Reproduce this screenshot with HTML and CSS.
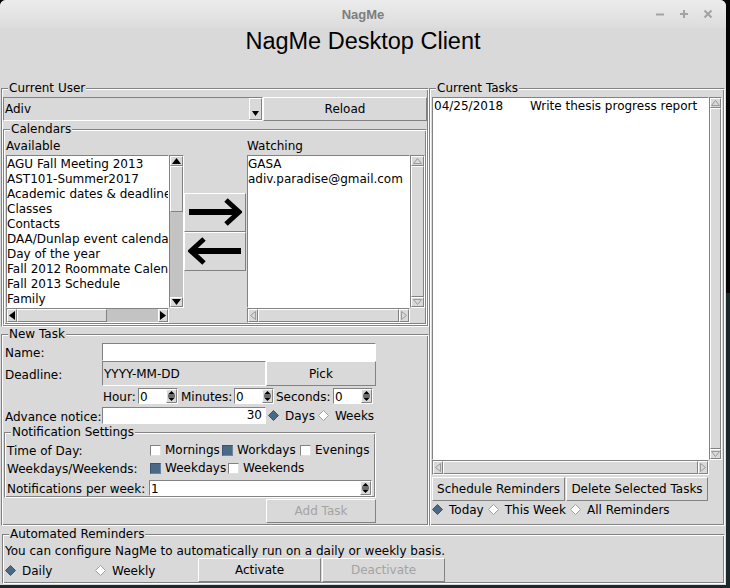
FILE: index.html
```html
<!DOCTYPE html>
<html lang="en">
<head>
<meta charset="utf-8">
<title>NagMe</title>
<link rel="stylesheet" href="styles.css">
</head>
<body>
<div class="window">
  <div class="titlebar">
    <span class="wtitle">NagMe</span>
    <div class="wctrl">
      <svg width="10" height="10" viewBox="0 0 10 10"><path d="M1 5.5H9"/></svg>
      <svg width="10" height="10" viewBox="0 0 10 10"><path d="M1 5H9M5 1V9"/></svg>
      <svg width="10" height="10" viewBox="0 0 10 10"><path d="M1.5 1.5L8.5 8.5M8.5 1.5L1.5 8.5"/></svg>
    </div>
  </div>
  <h1 class="heading">NagMe Desktop Client</h1>
  <div class="main">
    <div class="leftcol">
      <fieldset class="frame user">
        <legend>Current User</legend>
        <div class="userrow">
          <div class="combo"><span class="combotext">Adiv</span><span class="dropbtn"><svg width="7" height="5" viewBox="0 0 7 5"><path d="M0 0H7L3.5 5Z"/></svg></span></div>
          <button class="btn reload">Reload</button>
        </div>
        <fieldset class="frame calendars">
          <legend>Calendars</legend>
          <div class="calgrid">
            <div class="caplabel">Available</div>
            <div></div>
            <div class="caplabel">Watching</div>
            <div class="listcell">
              <div class="listbox cal">
                <div>AGU Fall Meeting 2013</div>
                <div>AST101-Summer2017</div>
                <div>Academic dates &amp; deadlines</div>
                <div>Classes</div>
                <div>Contacts</div>
                <div>DAA/Dunlap event calendar</div>
                <div>Day of the year</div>
                <div>Fall 2012 Roommate Calendar</div>
                <div>Fall 2013 Schedule</div>
                <div>Family</div>
                <div>Finals</div>
              </div>
              <div class="vscroll">
                <div class="sarr v"><svg width="9" height="6" viewBox="0 0 9 6"><path d="M0 6L4.5 0L9 6Z"/></svg></div>
                <div class="slider vslide-avail"></div>
                <div class="trough"></div>
                <div class="sarr v"><svg width="9" height="6" viewBox="0 0 9 6"><path d="M0 0L4.5 6L9 0Z"/></svg></div>
              </div>
            </div>
            <div class="arrowcell">
              <button class="btn arrowbtn"><svg width="54" height="30" viewBox="0 0 54 30"><path class="shaft" d="M1 15H49"/><path class="head" d="M38 3L51 15L38 27"/></svg></button>
              <button class="btn arrowbtn"><svg width="54" height="30" viewBox="0 0 54 30"><path class="shaft" d="M5 15H53"/><path class="head" d="M16 3L3 15L16 27"/></svg></button>
            </div>
            <div class="listcell">
              <div class="listbox cal">
                <div>GASA</div>
                <div>adiv.paradise@gmail.com</div>
              </div>
              <div class="vscroll off">
                <div class="sarr v"><svg width="9" height="6" viewBox="0 0 9 6"><path d="M0.5 5.5L4.5 0.5L8.5 5.5Z"/></svg></div>
                <div class="slider full"></div>
                <div class="sarr v"><svg width="9" height="6" viewBox="0 0 9 6"><path d="M0.5 0.5L4.5 5.5L8.5 0.5Z"/></svg></div>
              </div>
            </div>
            <div class="hscroll">
              <div class="sarr h"><svg width="6" height="9" viewBox="0 0 6 9"><path d="M6 0L0 4.5L6 9Z"/></svg></div>
              <div class="slider hslide-avail"></div>
              <div class="trough"></div>
              <div class="sarr h"><svg width="6" height="9" viewBox="0 0 6 9"><path d="M0 0L6 4.5L0 9Z"/></svg></div>
            </div>
            <div></div>
            <div class="hscroll off">
              <div class="sarr h"><svg width="6" height="9" viewBox="0 0 6 9"><path d="M5.5 0.5L0.5 4.5L5.5 8.5Z"/></svg></div>
              <div class="slider full"></div>
              <div class="sarr h"><svg width="6" height="9" viewBox="0 0 6 9"><path d="M0.5 0.5L5.5 4.5L0.5 8.5Z"/></svg></div>
            </div>
          </div>
        </fieldset>
      </fieldset>

      <fieldset class="frame newtask">
        <legend>New Task</legend>
        <div class="ntrow namerow">
          <span class="ntlabel">Name:</span>
          <div class="entry nameentry"></div>
        </div>
        <div class="ntrow deadrow">
          <span class="ntlabel">Deadline:</span>
          <div class="entry dateentry">YYYY-MM-DD</div>
          <button class="btn pick">Pick</button>
        </div>
        <div class="ntrow timerow">
          <span class="ntlabel"></span>
          <span class="tl hourl">Hour:</span>
          <div class="spin tspin"><span class="spintext">0</span><svg class="spinbtn" width="11" height="14" viewBox="0 0 11 14"><rect x="0" y="0" width="11" height="14" fill="#d9d9d9"/><path d="M0.5 13.5V0.5H10.5" stroke="#fff" fill="none"/><path d="M0.5 13.5H10.5V0.5" stroke="#828282" fill="none"/><path d="M2 5.5L5.5 2L9 5.5Z" fill="#000"/><path d="M2 8.5L5.5 12L9 8.5Z" fill="#000"/><path d="M2 7H9" stroke="#000"/></svg></div>
          <span class="tl minl">Minutes:</span>
          <div class="spin tspin"><span class="spintext">0</span><svg class="spinbtn" width="11" height="14" viewBox="0 0 11 14"><rect x="0" y="0" width="11" height="14" fill="#d9d9d9"/><path d="M0.5 13.5V0.5H10.5" stroke="#fff" fill="none"/><path d="M0.5 13.5H10.5V0.5" stroke="#828282" fill="none"/><path d="M2 5.5L5.5 2L9 5.5Z" fill="#000"/><path d="M2 8.5L5.5 12L9 8.5Z" fill="#000"/><path d="M2 7H9" stroke="#000"/></svg></div>
          <span class="tl secl">Seconds:</span>
          <div class="spin tspin"><span class="spintext">0</span><svg class="spinbtn" width="11" height="14" viewBox="0 0 11 14"><rect x="0" y="0" width="11" height="14" fill="#d9d9d9"/><path d="M0.5 13.5V0.5H10.5" stroke="#fff" fill="none"/><path d="M0.5 13.5H10.5V0.5" stroke="#828282" fill="none"/><path d="M2 5.5L5.5 2L9 5.5Z" fill="#000"/><path d="M2 8.5L5.5 12L9 8.5Z" fill="#000"/><path d="M2 7H9" stroke="#000"/></svg></div>
        </div>
        <div class="ntrow advrow">
          <span class="ntlabel">Advance notice:</span>
          <div class="entry adventry">30</div>
          <span class="radio"><svg class="dia" width="11" height="11" viewBox="0 0 11 11"><path class="on" d="M5.5 0.5L10.5 5.5L5.5 10.5L0.5 5.5Z"/></svg><span class="rtext">Days</span></span>
          <span class="radio"><svg class="dia" width="11" height="11" viewBox="0 0 11 11"><path class="offd" d="M5.5 0.5L10.5 5.5L5.5 10.5L0.5 5.5Z"/></svg><span class="rtext">Weeks</span></span>
        </div>
        <fieldset class="frame notif">
          <legend>Notification Settings</legend>
          <div class="nrow first">
            <span class="nlabel">Time of Day:</span>
            <span class="chk w72"><span class="box"></span>Mornings</span>
            <span class="chk w78"><span class="box checked"></span>Workdays</span>
            <span class="chk"><span class="box"></span>Evenings</span>
          </div>
          <div class="nrow">
            <span class="nlabel">Weekdays/Weekends:</span>
            <span class="chk w78"><span class="box checked"></span>Weekdays</span>
            <span class="chk"><span class="box"></span>Weekends</span>
          </div>
          <div class="nrow perweek">
            <span class="nlabel short">Notifications per week:</span>
            <div class="spin wspin"><span class="spintext">1</span><svg class="spinbtn" width="11" height="14" viewBox="0 0 11 14"><rect x="0" y="0" width="11" height="14" fill="#d9d9d9"/><path d="M0.5 13.5V0.5H10.5" stroke="#fff" fill="none"/><path d="M0.5 13.5H10.5V0.5" stroke="#828282" fill="none"/><path d="M2 5.5L5.5 2L9 5.5Z" fill="#000"/><path d="M2 8.5L5.5 12L9 8.5Z" fill="#000"/><path d="M2 7H9" stroke="#000"/></svg></div>
          </div>
        </fieldset>
        <div class="ntrow addrow">
          <button class="btn addtask" disabled>Add Task</button>
        </div>
      </fieldset>
    </div>

    <fieldset class="frame tasks">
      <legend>Current Tasks</legend>
      <div class="tgrid">
        <div class="listbox tlist">
          <div><span class="tdate">04/25/2018</span>Write thesis progress report</div>
        </div>
        <div class="vscroll off">
          <div class="sarr v"><svg width="9" height="6" viewBox="0 0 9 6"><path d="M0.5 5.5L4.5 0.5L8.5 5.5Z"/></svg></div>
          <div class="slider full"></div>
          <div class="sarr v"><svg width="9" height="6" viewBox="0 0 9 6"><path d="M0.5 0.5L4.5 5.5L8.5 0.5Z"/></svg></div>
        </div>
        <div class="hscroll off">
          <div class="sarr h"><svg width="6" height="9" viewBox="0 0 6 9"><path d="M5.5 0.5L0.5 4.5L5.5 8.5Z"/></svg></div>
          <div class="slider full"></div>
          <div class="sarr h"><svg width="6" height="9" viewBox="0 0 6 9"><path d="M0.5 0.5L5.5 4.5L0.5 8.5Z"/></svg></div>
        </div>
      </div>
      <div class="tbtns">
        <button class="btn sched">Schedule Reminders</button>
        <button class="btn delsel">Delete Selected Tasks</button>
      </div>
      <div class="tradios">
        <span class="radio gap"><svg class="dia" width="11" height="11" viewBox="0 0 11 11"><path class="on" d="M5.5 0.5L10.5 5.5L5.5 10.5L0.5 5.5Z"/></svg><span class="rtext">Today</span></span>
        <span class="radio gap"><svg class="dia" width="11" height="11" viewBox="0 0 11 11"><path class="offd" d="M5.5 0.5L10.5 5.5L5.5 10.5L0.5 5.5Z"/></svg><span class="rtext">This Week</span></span>
        <span class="radio gap"><svg class="dia" width="11" height="11" viewBox="0 0 11 11"><path class="offd" d="M5.5 0.5L10.5 5.5L5.5 10.5L0.5 5.5Z"/></svg><span class="rtext">All Reminders</span></span>
      </div>
    </fieldset>
  </div>

  <fieldset class="frame auto">
    <legend>Automated Reminders</legend>
    <div class="autotext">You can configure NagMe to automatically run on a daily or weekly basis.</div>
    <div class="autorow">
      <span class="radio daily"><svg class="dia" width="11" height="11" viewBox="0 0 11 11"><path class="on" d="M5.5 0.5L10.5 5.5L5.5 10.5L0.5 5.5Z"/></svg><span class="rtext">Daily</span></span>
      <span class="radio weekly"><svg class="dia" width="11" height="11" viewBox="0 0 11 11"><path class="offd" d="M5.5 0.5L10.5 5.5L5.5 10.5L0.5 5.5Z"/></svg><span class="rtext">Weekly</span></span>
      <button class="btn autobtn">Activate</button>
      <button class="btn autobtn" disabled>Deactivate</button>
    </div>
  </fieldset>
</div>
</body>
</html>
```

FILE: styles.css
```css
* { box-sizing: border-box; }
html, body { margin: 0; padding: 0; }
body {
  width: 730px;
  height: 588px;
  overflow: hidden;
  background: linear-gradient(#040404 0, #040404 293px, #1a2a2b 293px);
  font-family: "DejaVu Sans", sans-serif;
  font-size: 12px;
  color: #000;
}
.window {
  width: 726px;
  height: 585px;
  background: #d9d9d9;
  border-radius: 6px 6px 0 0;
  overflow: hidden;
  display: flex;
  flex-direction: column;
}
.titlebar {
  height: 28px;
  flex: none;
  display: grid;
  grid-template-columns: 1fr auto 1fr;
  align-items: center;
  background: linear-gradient(#ececec, #dcdcdc);
}
.wtitle {
  grid-column: 2;
  font-family: "Liberation Sans", sans-serif;
  font-weight: bold;
  font-size: 13px;
  color: #7d7d7d;
}
.wctrl {
  grid-column: 3;
  justify-self: end;
  display: flex;
  gap: 14px;
  padding-right: 13px;
}
.wctrl svg { display: block; }
.wctrl path { stroke: #a3a3a3; stroke-width: 2; fill: none; }
.heading {
  margin: 0;
  height: 53px;
  flex: none;
  font-family: "Liberation Sans", sans-serif;
  font-weight: normal;
  font-size: 23.5px;
  line-height: 26px;
  text-align: center;
}
.main { display: flex; height: 446px; flex: none; }
.leftcol { width: 429px; padding-left: 1px; display: flex; flex-direction: column; }

.frame {
  margin: 0;
  padding: 0 1px 1px 1px;
  border: 1px solid;
  border-color: #828282 #fff #fff #828282;
  box-shadow: inset 1px 1px 0 #fff, inset -1px -1px 0 #828282;
  min-width: 0;
}
.frame > legend {
  margin-left: 5px;
  padding: 0 1px;
  height: 14px;
  line-height: 14px;
  background: #d9d9d9;
}

.btn {
  font: inherit;
  font-family: "DejaVu Sans", sans-serif;
  font-size: 12px;
  color: #000;
  background: #d9d9d9;
  border: 1px solid;
  border-color: #fff #828282 #828282 #fff;
  padding: 0;
  margin: 0;
  display: flex;
  align-items: center;
  justify-content: center;
}
.btn:disabled { color: #a3a3a3; }
.entry {
  background: #fff;
  border: 1px solid;
  border-color: #828282 #fff #fff #828282;
}

/* current user */
.user { height: 246px; width: 428px; }
.userrow { display: flex; margin-top: 2px; height: 24px; }
.combo {
  width: 260px;
  display: flex;
  align-items: center;
  justify-content: space-between;
  border: 1px solid;
  border-color: #828282 #fff #fff #828282;
  padding-left: 1px;
}
.dropbtn {
  width: 13px;
  height: 22px;
  border: 1px solid;
  border-color: #fff #828282 #828282 #fff;
  display: flex;
  align-items: flex-end;
  justify-content: center;
  padding-bottom: 3px;
}
.dropbtn svg { display: block; fill: #000; }
.reload { width: 164px; height: 24px; }

.calendars { margin-top: 1px; height: 203px; }
.calgrid {
  display: grid;
  grid-template-columns: 178px 63px 178px;
  grid-template-rows: 17px 153px 15px;
  margin-top: 2px;
  padding-left: 1px;
}
.caplabel { line-height: 15px; padding-top: 1px; white-space: nowrap; }
.listcell { display: flex; }
.listbox {
  background: #fff;
  border: 1px solid;
  border-color: #828282 #fff #fff #828282;
  overflow: hidden;
  white-space: nowrap;
  line-height: 15px;
  padding-top: 1px;
}
.listbox.cal { width: 163px; height: 153px; }
.arrowcell {
  display: flex;
  flex-direction: column;
  justify-content: center;
}
.arrowbtn { width: 62px; height: 39px; }
.arrowbtn svg { display: block; }
.arrowbtn .shaft { stroke: #000; stroke-width: 6; fill: none; }
.arrowbtn .head { stroke: #000; stroke-width: 5; fill: none; stroke-linejoin: miter; }

/* scrollbars */
.vscroll {
  width: 15px;
  display: flex;
  flex-direction: column;
  background: #c3c3c3;
  border: 1px solid;
  border-color: #828282 #fff #fff #828282;
}
.hscroll {
  width: 163px;
  height: 15px;
  display: flex;
  background: #c3c3c3;
  border: 1px solid;
  border-color: #828282 #fff #fff #828282;
}
.sarr {
  flex: none;
  background: #d9d9d9;
  border: 1px solid;
  border-color: #fff #828282 #828282 #fff;
  display: flex;
  align-items: center;
  justify-content: center;
}
.sarr.v { height: 10px; }
.sarr.h { width: 10px; }
.sarr svg { display: block; fill: #000; }
.off .sarr svg { fill: #d9d9d9; stroke: #9a9a9a; stroke-width: 1; }
.slider {
  flex: none;
  background: #d9d9d9;
  border: 1px solid;
  border-color: #fff #828282 #828282 #fff;
}
.slider.full { flex: 1; }
.trough { flex: 1; }
.vslide-avail { height: 46px; }
.hslide-avail { width: 90px; }
.off { background: #d9d9d9; }

/* new task */
.newtask { height: 199px; width: 428px; }
.ntrow { display: flex; align-items: center; }
.ntlabel { width: 99px; flex: none; padding-left: 2px; padding-top: 2px; white-space: nowrap; }
.namerow { margin-top: 2px; height: 18px; }
.nameentry { width: 274px; height: 18px; }
.deadrow { height: 25px; }
.dateentry {
  width: 164px;
  height: 25px;
  background: #d9d9d9;
  padding-left: 1px;
  padding-top: 1px;
  display: flex;
  align-items: center;
}
.pick { width: 110px; height: 25px; }
.timerow { margin-top: 2px; height: 16px; }
.tl { white-space: nowrap; padding-top: 2px; }
.hourl { margin-left: 1px; width: 35px; }
.minl { margin-left: 3px; width: 53px; }
.secl { margin-left: 2px; width: 57px; }
.spin {
  display: flex;
  align-items: center;
  justify-content: space-between;
  background: #fff;
  border: 1px solid;
  border-color: #828282 #fff #fff #828282;
  height: 16px;
}
.spintext { padding-left: 1px; padding-top: 1px; line-height: 14px; }
.spinbtn { display: block; flex: none; }
.tspin { width: 40px; }
.advrow { margin-top: 3px; height: 17px; }
.adventry {
  width: 164px;
  height: 17px;
  text-align: right;
  padding-right: 3px;
  line-height: 15px;
}
.radio { display: inline-flex; align-items: center; white-space: nowrap; }
.dia { display: block; flex: none; }
.dia .on { fill: #4a6984; stroke: #3c5670; stroke-width: 1; }
.dia .offd { fill: #fff; stroke: #a0a0a0; stroke-width: 1; }
.rtext { margin-left: 6px; padding-top: 1px; }
.advrow .radio { margin-left: 2px; }
.advrow .radio + .radio { margin-left: 3px; }

.notif { margin: 1px 0 0 1px; width: 372px; height: 73px; }
.nrow { display: flex; align-items: center; height: 18px; }
.nrow.first { margin-top: 2px; }
.nlabel { width: 144px; flex: none; padding-left: 1px; padding-top: 1px; white-space: nowrap; }
.nlabel.short { width: 143px; }
.chk { display: inline-flex; align-items: center; white-space: nowrap; }
.w72 { width: 72px; }
.w78 { width: 78px; }
.box {
  width: 11px;
  height: 11px;
  margin-right: 4px;
  background: #fff;
  border: 1px solid;
  border-color: #828282 #e0e0e0 #e0e0e0 #828282;
  flex: none;
}
.box.checked { background: #4a6984; border-color: #3a5470 #6a86a0 #6a86a0 #3a5470; }
.perweek { margin-top: 3px; height: 16px; }
.wspin { width: 223px; }
.addrow { margin-top: 1px; height: 24px; }
.addtask { margin-left: 263px; width: 110px; height: 24px; }

/* current tasks */
.tasks { width: 296px; height: 445px; }
.tgrid {
  display: grid;
  grid-template-columns: 277px 13px;
  grid-template-rows: 363px 15px;
  margin: 2px 0 0 1px;
}
.tlist { width: 277px; height: 363px; }
.tdate { display: inline-block; width: 97px; padding-left: 1px; }
.tgrid .vscroll { width: 13px; }
.tgrid .hscroll { width: 277px; }
.tbtns { display: flex; gap: 1px; margin: 2px 0 0 1px; height: 24px; }
.sched { width: 133px; height: 24px; }
.delsel { width: 142px; height: 24px; }
.tradios { display: flex; margin: 1px 0 0 1px; height: 15px; align-items: center; }
.radio.gap { margin-right: 4px; }

/* automated */
.auto { margin-left: 2px; width: 723px; height: 57px; flex: none; }
.autotext { margin-top: 3px; height: 14px; line-height: 15px; padding-left: 1px; white-space: nowrap; }
.autorow { display: flex; align-items: center; height: 24px; padding-left: 1px; }
.daily { width: 90px; }
.weekly { width: 103px; }
.autobtn { width: 123px; height: 24px; margin-right: 1px; }
```
